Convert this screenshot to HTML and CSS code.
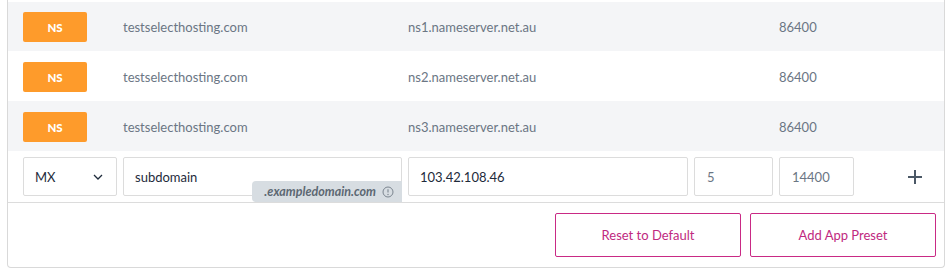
FILE: index.html
```html
<!DOCTYPE html>
<html lang="en">
<head>
<meta charset="utf-8">
<title>DNS records</title>
<link rel="stylesheet" href="styles.css">
</head>
<body>
<div class="panel">
  <div class="row row-alt">
    <div class="cell"><span class="type-badge">NS</span></div>
    <div class="cell">testselecthosting.com</div>
    <div class="cell">ns1.nameserver.net.au</div>
    <div class="cell">86400</div>
  </div>
  <div class="row">
    <div class="cell"><span class="type-badge">NS</span></div>
    <div class="cell">testselecthosting.com</div>
    <div class="cell">ns2.nameserver.net.au</div>
    <div class="cell">86400</div>
  </div>
  <div class="row row-alt">
    <div class="cell"><span class="type-badge">NS</span></div>
    <div class="cell">testselecthosting.com</div>
    <div class="cell">ns3.nameserver.net.au</div>
    <div class="cell">86400</div>
  </div>
  <div class="edit-row">
    <div class="field select-field">
      <span>MX</span>
      <svg class="chevron" width="10" height="6" viewBox="0 0 10 6"><path d="M1 1 L5 5 L9 1" fill="none" stroke="#1e2b3b" stroke-width="1.3"/></svg>
    </div>
    <div class="field sub-field">
      <span>subdomain</span>
      <span class="suffix">.exampledomain.com
        <svg class="info" width="12" height="12" viewBox="0 0 12 12"><circle cx="6" cy="6" r="5" fill="none" stroke="#7b858f" stroke-width="1"/><path d="M6 3.2 V6.6" stroke="#7b858f" stroke-width="1.1"/><circle cx="6" cy="8.5" r="0.7" fill="#7b858f"/></svg>
      </span>
    </div>
    <div class="field">103.42.108.46</div>
    <div class="field muted">5</div>
    <div class="field muted">14400</div>
    <div class="add-cell">
      <svg width="16" height="16" viewBox="0 0 16 16"><path d="M8 1 V15 M1 8 H15" stroke="#4b5866" stroke-width="2"/></svg>
    </div>
  </div>
  <div class="actions">
    <button class="btn">Reset to Default</button>
    <button class="btn">Add App Preset</button>
  </div>
</div>
</body>
</html>
```
FILE: styles.css
```css
html, body {
  margin: 0;
  padding: 0;
  background: #ffffff;
}
body {
  font-family: "Lato", "Liberation Sans", sans-serif;
  font-size: 13px;
}
.panel {
  box-sizing: border-box;
  width: 938px;
  margin-left: 7px;
  height: 268px;
  padding-top: 2px;
  border: 1px solid #d9d9d9;
  border-top: none;
  border-radius: 0 0 4px 4px;
}
.row {
  display: grid;
  grid-template-columns: 100px 285px 371px 1fr;
  align-items: center;
  box-sizing: border-box;
  height: 50px;
  padding: 2px 0 0 15px;
  color: #6b7684;
}
.row:first-child {
  height: 49px;
  padding-top: 1px;
}
.row-alt {
  background: #f4f5f7;
}
.type-badge {
  display: flex;
  align-items: center;
  justify-content: center;
  width: 64px;
  height: 30px;
  background: #fe9b2b;
  border-radius: 2px;
  color: #ffffff;
  font-weight: 900;
  font-size: 11.5px;
}
.edit-row {
  display: grid;
  grid-template-columns: 94px 279px 280px 79px 75px 1fr;
  column-gap: 6px;
  align-items: center;
  padding: 6px 0 6px 15px;
  border-bottom: 1px solid #dcdcdc;
}
.field {
  position: relative;
  box-sizing: border-box;
  height: 39px;
  display: flex;
  align-items: center;
  padding: 0 11px;
  border: 1px solid #dcdcdc;
  border-radius: 2px;
  color: #1e2b3b;
  font-size: 13px;
}
.field.muted {
  color: #6b7684;
  padding-left: 12px;
}
.select-field {
  justify-content: space-between;
  padding-right: 13px;
}
.chevron {
  margin-top: 1px;
}
.suffix {
  position: absolute;
  right: -1px;
  top: 23px;
  height: 21px;
  box-sizing: border-box;
  padding: 0 8px 0 12px;
  display: flex;
  align-items: center;
  gap: 6px;
  background: #d7dde2;
  border-radius: 4px 0 0 4px;
  color: #5d6873;
  font-size: 12.5px;
  font-weight: 700;
  font-style: italic;
}
.info {
  display: block;
}
.add-cell {
  display: flex;
  justify-content: flex-end;
  padding-right: 21px;
}
.add-cell svg {
  display: block;
}
.actions {
  display: flex;
  justify-content: flex-end;
  gap: 9px;
  padding: 10px 8px 0 0;
}
.btn {
  box-sizing: border-box;
  width: 186px;
  height: 44px;
  background: #ffffff;
  border: 1px solid #c92a85;
  border-radius: 2px;
  color: #c0297f;
  font-family: "Lato", "Liberation Sans", sans-serif;
  font-size: 13px;
}
```
